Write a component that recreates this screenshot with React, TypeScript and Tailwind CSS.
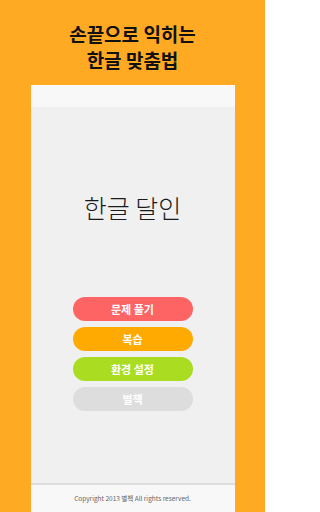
import React from "react";

const buttons = [
  { label: "문제 풀기", cls: "bg-[#ff6464]" },
  { label: "복습", cls: "bg-[#ffaa00]" },
  { label: "환경 설정", cls: "bg-[#aadd22]" },
  { label: "별책", cls: "bg-[#dddddd]" },
];

export default function App() {
  return (
    <div className="w-[265px] h-[512px] bg-[#ffaa22] flex flex-col items-center overflow-hidden font-['Noto_Sans_CJK_KR',sans-serif]">
      <div className="h-[85px] pt-[21px] text-center font-bold text-[19px] leading-[26px] text-[#111]">
        손끝으로 익히는
        <br />
        한글 맞춤법
      </div>
      <div className="w-[204px] flex-1 flex flex-col">
        <div className="h-[22px] bg-[#f8f8f8]" />
        <div className="flex-1 bg-[#f0f0f0] flex flex-col items-center">
          <div className="mt-[84px] text-[25px] font-light leading-[32px] text-[#1a1a1a]">한글 달인</div>
          <div className="mt-[74px] flex flex-col gap-[6px]">
            {buttons.map((b) => (
              <div
                key={b.label}
                className={`w-[120px] h-[24px] rounded-full ${b.cls} text-white font-bold text-[11px] flex items-center justify-center`}
              >
                {b.label}
              </div>
            ))}
          </div>
        </div>
        <div className="h-[2px] bg-[#dddddd]" />
        <div className="h-[27px] bg-[#f8f8f8] flex items-center justify-center text-[6.5px] text-[#666]">
          Copyright 2013 별책 All rights reserved.
        </div>
      </div>
    </div>
  );
}
